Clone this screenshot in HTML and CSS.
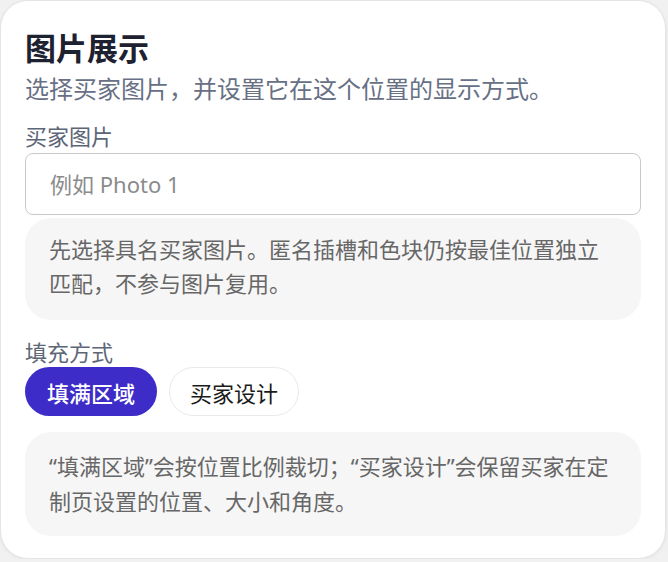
FILE: index.html
```html
<!DOCTYPE html>
<html lang="zh-CN">
<head>
  <meta charset="UTF-8" />
  <title>图片展示</title>
  <link rel="stylesheet" href="styles.css">
</head>
<body>

  <div class="card">
    <h2 class="card-title">图片展示</h2>
    <p class="subtle">选择买家图片，并设置它在这个位置的显示方式。</p>

    <!-- 买家图片 -->
    <label class="field-label" for="photo-input">买家图片</label>
    <input type="text" id="photo-input" placeholder="例如 Photo 1" />
    <div class="hint">先选择具名买家图片。匿名插槽和色块仍按最佳位置独立匹配，不参与图片复用。</div>

    <!-- 填充方式 -->
    <div class="field-label field-label-gap">填充方式</div>
    <div class="pill-row">
      <button class="pill active">填满区域</button>
      <button class="pill">买家设计</button>
    </div>
    <div class="hint hint-gap">“填满区域”会按位置比例裁切；“买家设计”会保留买家在定制页设置的位置、大小和角度。</div>
  </div>

</body>
</html>
```

FILE: styles.css
```css
body {
  margin: 0;
  background: #f1f1f1;
  font-family: "Noto Sans", "Noto Sans CJK SC", sans-serif;
}

.card {
  width: 666px;
  box-sizing: border-box;
  background: #fff;
  border: 1px solid #e4e4e4;
  border-radius: 28px;
  padding: 28px 24px 22px 24px;
  box-shadow: 0 1px 4px rgba(0, 0, 0, 0.06);
}

.card-title {
  margin: 0;
  font-size: 31px;
  line-height: 38px;
  font-weight: 700;
  color: #1d2130;
}

.subtle {
  margin: 6px 0 0;
  font-size: 24px;
  line-height: 32px;
  color: #677084;
}

.field-label {
  display: block;
  margin-top: 16px;
  font-size: 22px;
  line-height: 30px;
  color: #5d6677;
}

.field-label-gap {
  margin-top: 17px;
}

#photo-input {
  display: block;
  width: 100%;
  height: 62px;
  box-sizing: border-box;
  margin-top: 2px;
  padding: 0 24px;
  border: 1.5px solid #c9c9c9;
  border-radius: 8px;
  font-family: inherit;
  font-size: 22px;
  color: #333;
  outline: none;
}

#photo-input::placeholder {
  color: #8b8b8b;
}

.hint {
  margin-top: 3px;
  padding: 14px 24px 20px;
  background: #f6f6f6;
  border-radius: 26px;
  font-size: 22px;
  line-height: 34px;
  color: #676767;
}

.hint-gap {
  margin-top: 16px;
  padding: 17px 24px 17px;
  line-height: 35px;
}

.pill-row {
  display: flex;
  gap: 12px;
}

.pill {
  height: 49px;
  padding: 0 20px;
  border: 1.5px solid #e9e9e9;
  border-radius: 25px;
  background: #fff;
  font-family: inherit;
  font-size: 22px;
  color: #1b1b1b;
  cursor: pointer;
}

.pill.active {
  padding: 0 22px;
  border: none;
  background: #3d2cc7;
  color: #fff;
  font-weight: 500;
}
```
